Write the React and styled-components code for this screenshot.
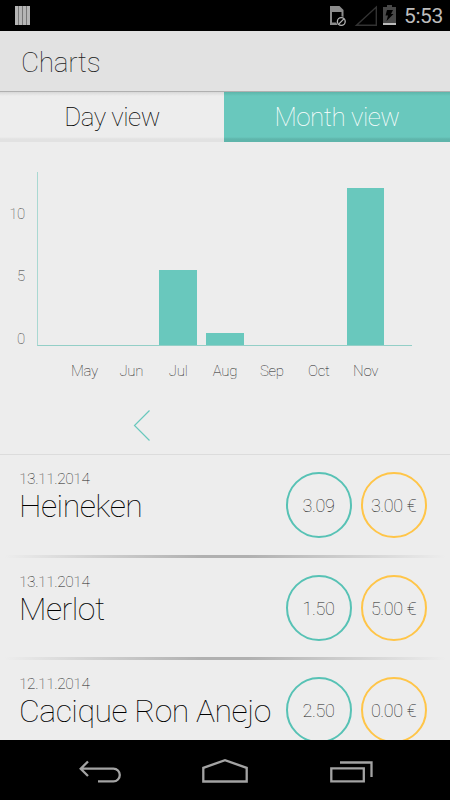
import styled, { createGlobalStyle } from "styled-components";

const GlobalStyle = createGlobalStyle`
  * {
    box-sizing: border-box;
  }

  body {
    margin: 0;
    background: #ededed;
    font-family: Roboto, "Liberation Sans", sans-serif;
    font-weight: 100;
  }
`;

const Screen = styled.div`
  width: 450px;
  height: 800px;
  display: flex;
  flex-direction: column;
  overflow: hidden;
  background: #ededed;
`;

const StatusBar = styled.div`
  height: 31px;
  flex-shrink: 0;
  display: flex;
  align-items: center;
  justify-content: space-between;
  padding: 0 8px 0 15px;
  background: #000;
`;

const StatusIcons = styled.div`
  display: flex;
  align-items: center;

  svg {
    display: block;
  }
`;

const Clock = styled.span`
  width: 38px;
  margin-left: 7px;
  padding-top: 2px;
  font-size: 21px;
  font-weight: 400;
  line-height: 29px;
  letter-spacing: -0.4px;
  color: #bdbdbd;
  white-space: nowrap;
`;

const Header = styled.div`
  height: 61px;
  flex-shrink: 0;
  padding: 2px 0 0 21px;
  border-bottom: 1px solid #b0b0b0;
  background: #e2e2e2;
  font-size: 28px;
  line-height: 60px;
  letter-spacing: -0.3px;
  color: #222;
`;

const Tabs = styled.div`
  height: 49px;
  flex-shrink: 0;
  display: grid;
  grid-template-columns: 224px 226px;
`;

const Tab = styled.div`
  text-align: center;
  font-size: 26px;
  line-height: 50px;
  letter-spacing: -0.5px;
  color: ${(props) => (props.$active ? "#fff" : "#000")};
  background: ${(props) =>
    props.$active
      ? "linear-gradient(#5db5aa 0, #69c8bd 4px, #69c8bd 45px, #5fb5ab 47px)"
      : "linear-gradient(#d8d8d8 0, #ededed 4px, #ededed 45px, #e2e2e2 47px)"};
`;

const Chart = styled.div`
  height: 250px;
  flex-shrink: 0;
  display: grid;
  grid-template-columns: 37px 375px;
  grid-template-rows: 174px 50px;
  padding-top: 31px;
`;

const Scale = styled.div`
  display: flex;
  flex-direction: column;
  justify-content: flex-end;
  padding-right: 12px;
  text-align: right;
  font-size: 15px;
  line-height: 62.3px;
  letter-spacing: -0.3px;
  color: #333;
  margin-bottom: -24px;
`;

const Plot = styled.div`
  display: flex;
  align-items: flex-end;
  padding: 0 23px;
  border-left: 1px solid #a9d8d2;
  border-bottom: 1px solid #93cfc7;
`;

const Slot = styled.div`
  flex: 1;
  display: flex;
  justify-content: center;
`;

const Bar = styled.div`
  width: 37.5px;
  background: #69c8bd;
`;

const Months = styled.div`
  grid-column: 2;
  display: flex;
  padding: 0 23px 0 24px;
  font-size: 15px;
  line-height: 50px;
  letter-spacing: -0.3px;
  color: #222;
  text-align: center;

  span {
    flex: 1;
  }
`;

const Pager = styled.div`
  height: 64px;
  flex-shrink: 0;
  padding: 18px 0 0 133px;
  border-bottom: 1px solid #dcdcdc;

  svg {
    display: block;
  }
`;

const List = styled.div`
  flex: 1;
  min-height: 0;
  overflow: hidden;
`;

const Row = styled.div`
  height: 102.5px;
  display: flex;
  flex-direction: column;
`;

const RowBody = styled.div`
  flex: 1;
  display: flex;
  justify-content: space-between;
  padding: 17px 23.5px 0 19px;
`;

const Info = styled.div`
  white-space: nowrap;
`;

const DrinkDate = styled.div`
  font-size: 15.5px;
  line-height: 14px;
  letter-spacing: -0.4px;
  color: #222;
`;

const DrinkName = styled.div`
  font-size: 32px;
  line-height: 40px;
  letter-spacing: -0.5px;
  color: #000;
`;

const Values = styled.div`
  display: flex;
  gap: 9px;
`;

const Circle = styled.div`
  width: 66px;
  height: 66px;
  border: 2px solid ${(props) => props.$color};
  border-radius: 50%;
  text-align: center;
  font-size: 18px;
  line-height: 64px;
  letter-spacing: -0.4px;
  color: #222;
  white-space: nowrap;
`;

const Divider = styled.div`
  height: 3px;
  background: linear-gradient(
    90deg,
    transparent 1%,
    #b0b0b0 45%,
    #b0b0b0 55%,
    transparent 99%
  );
`;

const NavBar = styled.div`
  height: 60px;
  flex-shrink: 0;
  background: #000;

  svg {
    display: block;
  }
`;

const months = [
  { name: "May", height: 0 },
  { name: "Jun", height: 0 },
  { name: "Jul", height: 75 },
  { name: "Aug", height: 12 },
  { name: "Sep", height: 0 },
  { name: "Oct", height: 0 },
  { name: "Nov", height: 157 },
];

const drinks = [
  { date: "13.11.2014", name: "Heineken", amount: "3.09", price: "3.00 €" },
  { date: "13.11.2014", name: "Merlot", amount: "1.50", price: "5.00 €" },
  { date: "12.11.2014", name: "Cacique Ron Anejo", amount: "2.50", price: "0.00 €" },
];

function BarsIcon() {
  return (
    <svg width="15" height="19" viewBox="0 0 15 19">
      <path fill="#b5b5b5" d="M0 0h3v19H0zM4 0h3v19H4zM8 0h3v19H8zM12 0h3v19h-3z" />
      <path fill="#777" d="M3 0h1v19H3zM7 0h1v19H7zM11 0h1v19h-1z" />
    </svg>
  );
}

function SystemIcons() {
  return (
    <svg width="69" height="31" viewBox="328 0 69 31" fill="none">
      <path
        fill="#8c8c8c"
        fillRule="evenodd"
        d="M330 6h9.500l4 4v15H330zM332 12v10.500h9.500V12z"
      />
      <circle cx="341.300" cy="21.500" r="5" fill="#000" />
      <circle cx="341.300" cy="21.500" r="3.900" stroke="#b5b5b5" strokeWidth="1.300" />
      <path d="M338.700 24.100l5.200-5.200" stroke="#b5b5b5" strokeWidth="1.300" />
      <path d="M356.500 25.300L376.300 7v18.300z" stroke="#333" strokeWidth="1.400" />
      <path fill="#484848" d="M387 5h5v2h4v16h-13V7h4z" />
      <path fill="#bdbdbd" d="M383 23h13v2h-13z" />
      <path fill="#000" d="M387 10h6l-2 4h2.500l-7 7 1.500-5.500h-2.500z" />
    </svg>
  );
}

export default function App() {
  return (
    <Screen>
      <GlobalStyle />
      <StatusBar>
        <BarsIcon />
        <StatusIcons>
          <SystemIcons />
          <Clock>5:53</Clock>
        </StatusIcons>
      </StatusBar>
      <Header>Charts</Header>
      <Tabs>
        <Tab>Day view</Tab>
        <Tab $active>Month view</Tab>
      </Tabs>

      <Chart>
        <Scale>
          <span>10</span>
          <span>5</span>
          <span>0</span>
        </Scale>
        <Plot>
          {months.map((month) => (
            <Slot key={month.name}>
              <Bar style={{ height: month.height }} />
            </Slot>
          ))}
        </Plot>
        <Months>
          {months.map((month) => (
            <span key={month.name}>{month.name}</span>
          ))}
        </Months>
      </Chart>

      <Pager>
        <svg width="18" height="34" viewBox="133 409 18 34" fill="none">
          <path d="M149.500 410.500l-15 15 15 15" stroke="#69c8bd" strokeWidth="1.200" />
        </svg>
      </Pager>

      <List>
        {drinks.map((drink) => (
          <Row key={drink.name}>
            <RowBody>
              <Info>
                <DrinkDate>{drink.date}</DrinkDate>
                <DrinkName>{drink.name}</DrinkName>
              </Info>
              <Values>
                <Circle $color="#57c2b5">{drink.amount}</Circle>
                <Circle $color="#ffc548">{drink.price}</Circle>
              </Values>
            </RowBody>
            <Divider />
          </Row>
        ))}
      </List>

      <NavBar>
        <svg width="450" height="60" viewBox="0 740 450 60" fill="none" stroke="#a3a3a3" strokeWidth="2.300">
          <path d="M88 761.500l-7.300 7.200 7.300 7.300M81 768.700h32.500a6.300 6.300 0 0 1 0 12.600H98" />
          <path d="M203.300 781.500v-13.700l21.700-7.600 21.700 7.600v13.700z" />
          <path d="M331.300 768.300h32.500v13h-32.500zM340 762.500h31.500V777" />
        </svg>
      </NavBar>
    </Screen>
  );
}
